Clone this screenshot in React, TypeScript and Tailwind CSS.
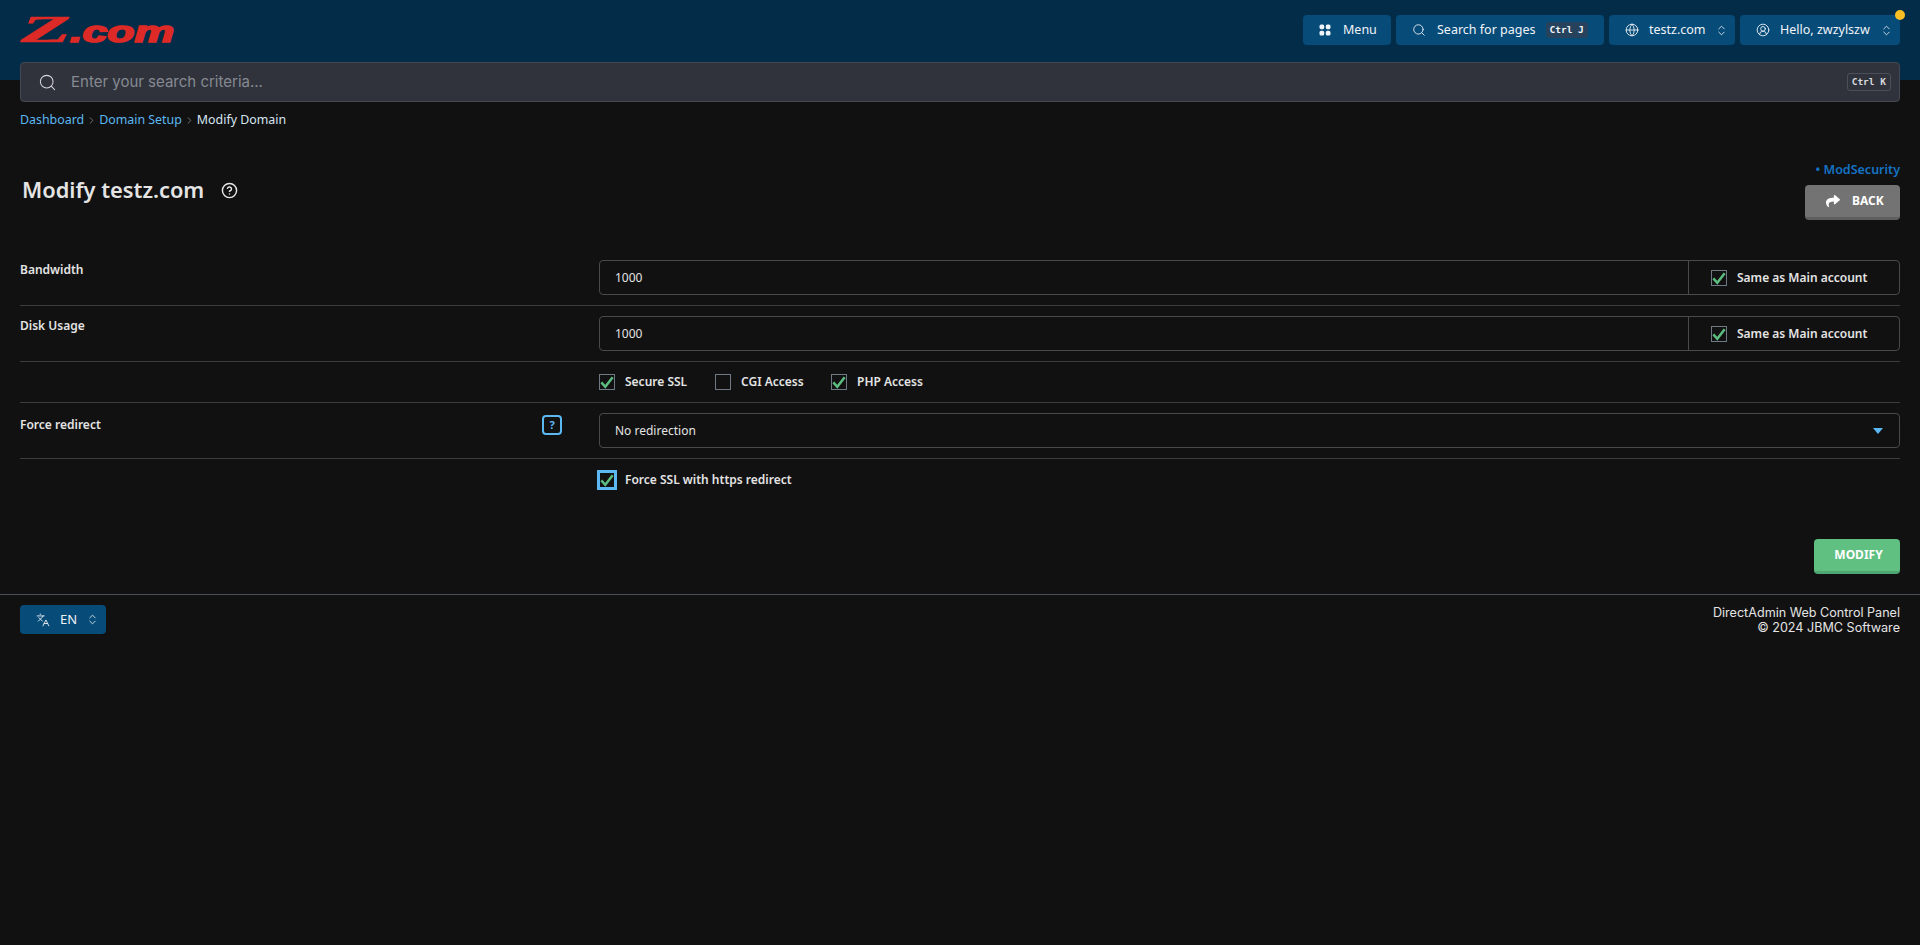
import { ChevronRight, ChevronsUpDown, CircleHelp, CircleUserRound, Globe, Languages, Search } from "lucide-react";
import { FaShare } from "react-icons/fa";

const BODY = "font-['Noto_Sans',sans-serif]";
const WIDE = "font-['Inter',sans-serif]";
const MONO = "font-['DejaVu_Sans_Mono',monospace]";

function Check({ checked = true, focus = false }: { checked?: boolean; focus?: boolean }) {
  return (
    <span
      className={
        focus
          ? "relative h-5 w-5 shrink-0 border-[3px] border-[#5cb8f2]"
          : "relative h-4 w-4 shrink-0 border border-[#6f7885]"
      }
    >
      {checked && (
        <svg viewBox="0 0 16 16" className="absolute left-0 top-0 h-[14px] w-[14px]">
          <path d="M1.5 8.5 L6 13.5 L14.5 2.5" fill="none" stroke="#5cbd80" strokeWidth="2.8" />
        </svg>
      )}
    </span>
  );
}

function CheckLabel({ label, checked, focus, className }: { label: string; checked?: boolean; focus?: boolean; className?: string }) {
  return (
    <label className={`flex items-center text-[12px] font-semibold text-[#e4e4e4] ${className ?? ""}`}>
      <Check checked={checked} focus={focus} />
      <span className={focus ? "ml-[8px]" : "ml-[10px]"}>{label}</span>
    </label>
  );
}

function TopButton({ children, className }: { children: React.ReactNode; className?: string }) {
  return (
    <button className={`flex h-[30px] items-center rounded-[4px] bg-[#074b78] text-[12.5px] text-[#f0f4f8] ${className ?? ""}`}>
      {children}
    </button>
  );
}

function Logo() {
  return (
    <svg viewBox="0 0 155 30" className="h-[30px] w-[155px] overflow-visible" role="img" aria-label="Z.com">
      <text
        x="1"
        y="27"
        fontFamily="Liberation Serif"
        fontWeight="700"
        fontStyle="italic"
        fontSize="37"
        fill="#dd2a27"
        stroke="#dd2a27"
        strokeWidth="0.6"
        textLength="50"
        lengthAdjust="spacingAndGlyphs"
      >
        Z
      </text>
      <text
        x="50"
        y="27"
        fontFamily="Liberation Sans"
        fontWeight="700"
        fontStyle="italic"
        fontSize="29"
        fill="#dd2a27"
        stroke="#dd2a27"
        strokeWidth="1.6"
        textLength="104"
        lengthAdjust="spacingAndGlyphs"
      >
        .com
      </text>
    </svg>
  );
}

function FieldRow({ label, value }: { label: string; value: string }) {
  return (
    <div className="flex h-[56px] border-b border-[#3d3d3d] pt-[10px]">
      <div className="w-[579px] pt-[1px] text-[12px] font-semibold leading-[18px] text-[#e4e4e4]">{label}</div>
      <div className="flex h-[35px] flex-1 rounded-[4px] border border-[#4a4a4a]">
        <div className="flex flex-1 items-center border-r border-[#4a4a4a] pl-[15px] text-[12px] text-[#e4e4e4]">{value}</div>
        <div className="flex w-[210px] items-center pl-[22px]">
          <CheckLabel label="Same as Main account" />
        </div>
      </div>
    </div>
  );
}

export default function App() {
  return (
    <div className={`min-h-[945px] bg-[#111111] ${BODY}`}>
      <header className="flex h-[80px] items-start justify-between bg-[#022c47] pl-5 pr-5 pt-[15px]">
        <Logo />
        <div className="relative flex gap-[5px]">
          <TopButton className="w-[88px] pl-4">
            <svg viewBox="0 0 12 12" className="h-3 w-3" fill="currentColor">
              <rect x="0.5" y="0.5" width="4.7" height="4.7" rx="1.6" />
              <rect x="6.8" y="0.5" width="4.7" height="4.7" rx="1.6" />
              <rect x="0.5" y="6.8" width="4.7" height="4.7" rx="1.6" />
              <rect x="6.8" y="6.8" width="4.7" height="4.7" rx="1.6" />
            </svg>
            <span className="ml-[12px]">Menu</span>
          </TopButton>
          <TopButton className="w-[208px] pl-4">
            <Search size={14} strokeWidth={1.5} />
            <span className="ml-[11px]">Search for pages</span>
            <span className={`ml-[10px] rounded-[3px] bg-[#26425c] px-[4px] py-[1px] text-[9.5px] font-bold leading-[14px] ${MONO}`}>Ctrl J</span>
          </TopButton>
          <TopButton className="w-[126px] pl-4">
            <Globe size={14} strokeWidth={1.5} />
            <span className="ml-[10px]">testz.com</span>
            <ChevronsUpDown size={13} strokeWidth={1.5} className="ml-[9px]" />
          </TopButton>
          <TopButton className="w-[160px] pl-4">
            <CircleUserRound size={14} strokeWidth={1.5} />
            <span className="ml-[10px]">Hello, zwzylszw</span>
            <ChevronsUpDown size={13} strokeWidth={1.5} className="ml-[10px]" />
          </TopButton>
          <span className="absolute -right-[5px] -top-[5px] h-[10px] w-[10px] rounded-full bg-[#fbbf24]" />
        </div>
      </header>

      <div className="px-5">
        <div className="-mt-[18px] flex h-10 items-center rounded-[4px] border border-[#434751] bg-[#30333c] pl-[17px] pr-[8px]">
          <Search size={19} strokeWidth={1.3} className="text-[#d4d6da]" />
          <span className={`ml-[14px] flex-1 text-[15px] text-[#868a92] ${WIDE}`}>Enter your search criteria...</span>
          <span className={`rounded-[3px] border border-[#4b4f5a] px-[4px] py-[1px] text-[9.5px] font-bold leading-[14px] text-[#d8dade] ${MONO}`}>Ctrl K</span>
        </div>

        <nav className="mt-[9px] flex h-[18px] items-center text-[12.4px] text-[#5cb8f2]">
          <span>Dashboard</span>
          <ChevronRight size={11} className="mx-[2px] text-[#777]" />
          <span>Domain Setup</span>
          <ChevronRight size={11} className="mx-[2px] text-[#777]" />
          <span className="text-[#d8e6f2]">Modify Domain</span>
        </nav>

        <div className="mt-[32px] flex h-[70px] items-start justify-between">
          <div className="ml-[2px] mt-[14px] flex items-center">
            <h1 className="text-[21.8px] font-semibold leading-[30px] text-[#e4e4e4]">Modify testz.com</h1>
            <CircleHelp size={17} strokeWidth={2} className="ml-[17px] text-[#e8e8e8]" />
          </div>
          <div className="flex flex-col items-end">
            <a className="text-[12.5px] font-semibold leading-[18px] text-[#1473c4]">• ModSecurity</a>
            <button className="mt-[6px] flex h-[35px] w-[95px] items-center rounded-[4px] border-b-[3px] border-[#5f5f5f] bg-[#737373] pl-[21px] text-[12px] font-bold text-white">
              <FaShare size={14} />
              <span className="ml-3">BACK</span>
            </button>
          </div>
        </div>

        <div className="mt-[19px]">
          <FieldRow label="Bandwidth" value="1000" />
          <FieldRow label="Disk Usage" value="1000" />
          <div className="flex h-[41px] items-center border-b border-[#3d3d3d] pl-[579px]">
            <CheckLabel label="Secure SSL" className="w-[116px]" />
            <CheckLabel label="CGI Access" checked={false} className="w-[116px]" />
            <CheckLabel label="PHP Access" />
          </div>
          <div className="flex h-[56px] border-b border-[#3d3d3d] pt-[10px]">
            <div className="flex w-[579px] items-start justify-between pr-[37px] pt-[2px]">
              <span className="mt-[1px] text-[12px] font-semibold leading-[18px] text-[#e4e4e4]">Force redirect</span>
              <span className="flex h-5 w-5 items-center justify-center rounded-[4px] border-2 border-[#5cb8f2] text-[11px] font-bold text-[#5cb8f2]">?</span>
            </div>
            <div className="flex h-[35px] flex-1 items-center justify-between rounded-[4px] border border-[#4a4a4a] pl-[15px] pr-[16px] text-[12px] text-[#e4e4e4]">
              <span>No redirection</span>
              <span className="h-0 w-0 border-x-[5px] border-t-[6px] border-x-transparent border-t-[#5cb8f2]" />
            </div>
          </div>
          <div className="flex h-[41px] items-center pl-[577px]">
            <CheckLabel label="Force SSL with https redirect" focus />
          </div>
        </div>

        <div className="mt-[39px] flex justify-end">
          <button className="h-[35px] w-[86px] rounded-[4px] border-b-[3px] border-[#4ea672] bg-[#5fc082] pl-[3px] text-[12px] font-bold text-white">MODIFY</button>
        </div>
      </div>

      <footer className="mt-[20px] flex items-start justify-between border-t border-[#4a4f59] px-5 pt-[10px]">
        <button className="flex h-[29px] w-[86px] items-center rounded-[4px] bg-[#074b78] pl-4 text-[13px] text-[#f0f4f8]">
          <Languages size={14} strokeWidth={1.5} />
          <span className="ml-[10px]">EN</span>
          <ChevronsUpDown size={13} strokeWidth={1.5} className="ml-[9px]" />
        </button>
        <div className={`text-right text-[12.6px] font-normal leading-[15px] text-[#e4e4e4] ${WIDE}`}>
          <div>DirectAdmin Web Control Panel</div>
          <div>© 2024 JBMC Software</div>
        </div>
      </footer>
    </div>
  );
}
